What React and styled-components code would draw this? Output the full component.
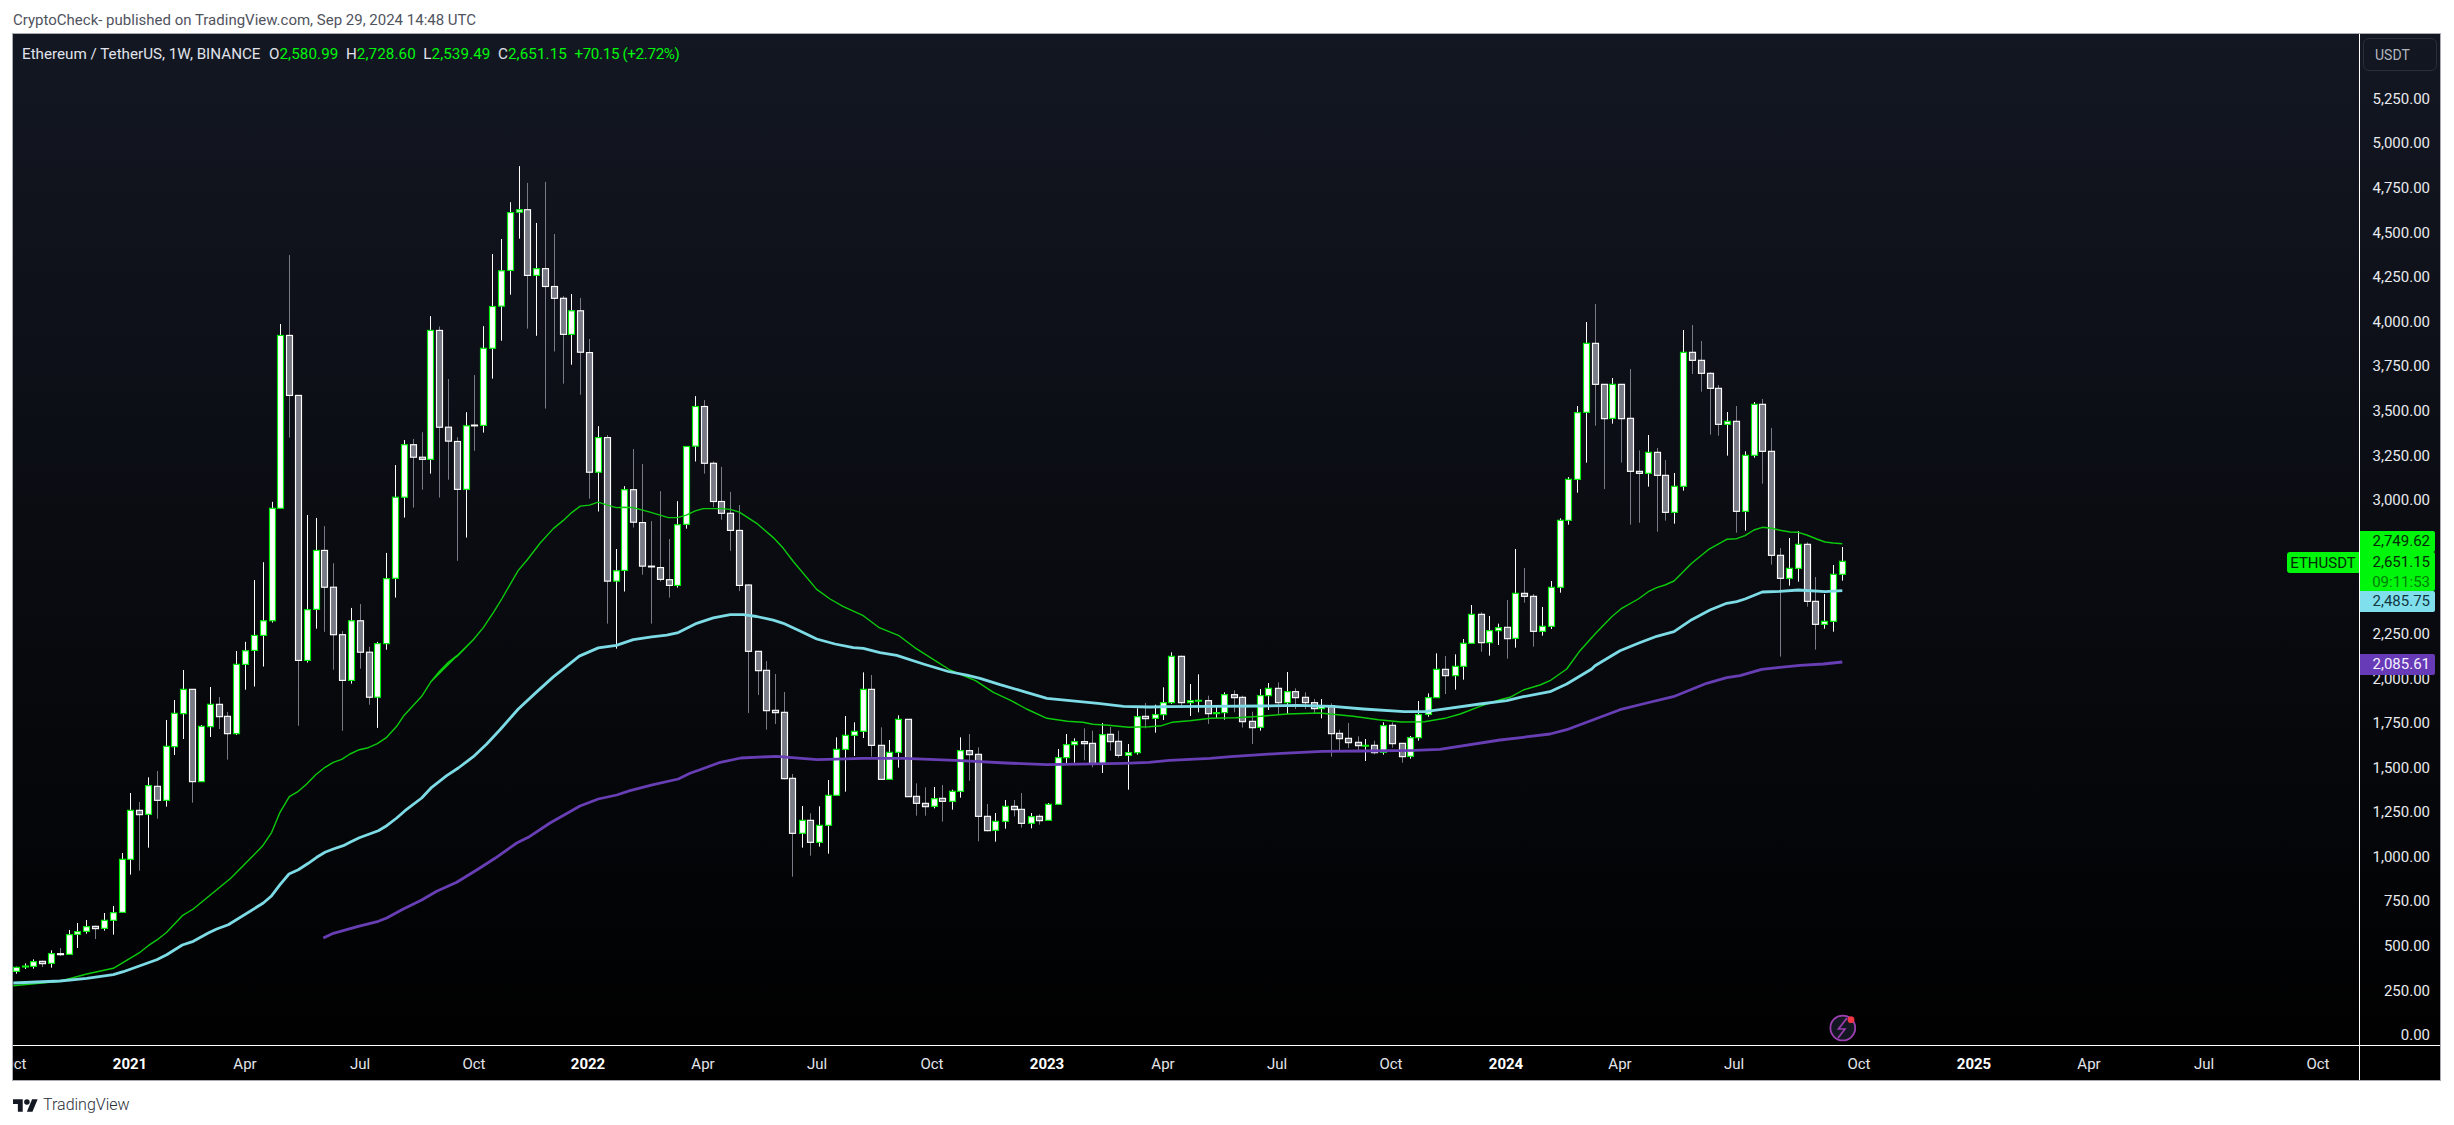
import React from "react";
import styled, { createGlobalStyle } from "styled-components";

const Global = createGlobalStyle`
  html, body { margin: 0; padding: 0; background: #fff; }
  body { font-family: Roboto, "Liberation Sans", sans-serif; }
`;

const seg = (ox, sx, oy, sy, arr) =>
  arr.map(([z, up, wt, bt, bb, wb]) => ({
    x: ox + z * sx, up,
    wt: oy + wt * sy, bt: oy + bt * sy, bb: oy + bb * sy, wb: oy + wb * sy,
  }));
const pts = (ox, sx, oy, sy, arr) => arr.map(([x, y]) => [ox + x * sx, oy + y * sy]);

const Y7 = 560 / 1568, X10 = 800 / 1568;

const candles = [
  ...seg(0, 1 / 3, 700, 1 / 3, [
    [49,1,803,805,817,824],[76,1,793,801,804,810],[100,1,781,788,802,809],[127,0,785,787,794,804],
    [154,1,754,764,793,806],[181,0,747,764,767,771],[208,1,693,707,766,766],[232,1,672,698,706,747],
    [259,1,663,683,697,704],[286,0,680,682,689,720],[313,1,642,664,688,695],[340,1,621,641,664,707],
    [367,1,462,481,640,640],[391,1,282,334,481,527],[418,0,309,334,347,515],[445,1,235,260,346,446],
    [472,0,216,262,304,359],[499,1,63,142,304,323],
  ]),
  ...seg(170, 1 / 3, 640, 1 / 3, [
    [13,1,183,223,323,348],[40,1,93,151,224,300],[67,0,151,151,428,491],[94,1,258,262,428,428],
    [121,1,144,196,263,294],[148,0,174,196,233,270],[172,0,219,232,284,362],[199,1,36,76,284,288],
  ]),
  ...seg(200, 1 / 3, 150, Y7, [
    [136,1,1380,1405,1443,1514],[163,1,1207,1362,1404,1505],[190,1,1157,1321,1362,1449],[217,1,988,1006,1321,1326],
    [241,1,490,522,1006,1006],[268,0,297,522,690,808],[295,0,690,690,1432,1615],[322,1,1025,1290,1432,1438],
    [349,1,1033,1124,1289,1343],[373,0,1056,1124,1227,1352],[400,0,1160,1227,1360,1458],[427,0,1350,1360,1488,1629],
    [454,1,1285,1321,1488,1497],[481,0,1274,1321,1409,1455],[508,0,1394,1409,1535,1556],[532,1,1380,1385,1535,1621],
    [559,1,1131,1203,1385,1402],[586,1,885,975,1202,1256],[613,1,815,828,975,1032],[640,0,812,828,863,1004],
    [667,0,793,863,869,954],[691,1,468,508,869,909],[718,0,497,508,779,976],[745,0,644,779,818,926],
    [772,0,807,819,953,1153],[799,1,737,775,953,1088],[823,0,633,773,775,845],[850,1,496,558,774,794],
    [877,1,294,441,558,643],[904,1,252,341,440,537],[931,1,149,178,340,408],[958,1,48,170,177,251],
    [982,0,95,170,354,503],[1009,1,207,335,354,523],[1036,0,92,335,385,727],[1063,0,238,385,418,567],
    [1090,0,412,418,519,657],[1114,1,406,453,519,604],[1141,0,417,453,569,688],[1168,0,532,570,905,979],
    [1195,1,776,808,905,1015],[1222,0,801,808,1210,1329],[1249,1,1120,1181,1210,1399],[1273,1,944,954,1180,1239],
    [1300,0,840,954,1045,1060],[1327,0,882,1046,1168,1192],[1354,0,1042,1168,1169,1329],[1381,0,958,1172,1205,1211],
    [1408,0,1092,1206,1222,1256],[1432,1,986,1052,1222,1228],[1459,1,833,833,1051,1063],[1486,1,692,721,832,875],
  ]),
  ...seg(500, 1 / 3, 150, Y7, [
    [613,0,703,721,880,909],[640,0,875,880,987,1003],[664,0,890,987,1020,1038],[691,0,960,1020,1068,1125],[718,0,997,1068,1222,1238],
  ]),
  ...seg(700, X10, 600, 1 / 3, [
    [95,0,-44,-42,157,342],[113,0,157,157,215,288],[130,0,186,214,335,392],[147,0,225,334,341,375],
    [164,0,279,340,539,541],[181,0,525,538,703,833],[199,1,621,664,703,746],[216,0,643,664,730,770],
    [233,1,622,679,730,743],[250,1,543,589,679,764],[267,1,415,451,589,589],[285,1,351,409,451,578],
    [302,1,370,397,409,471],[320,1,220,271,397,417],[336,0,228,271,439,473],[354,0,385,439,541,541],
    [371,1,423,460,541,542],[389,1,349,361,460,506],[407,0,361,361,593,593],[424,0,553,592,613,650],
    [441,0,565,613,623,650],[458,1,564,599,622,628],[475,0,558,598,607,668],[493,1,572,577,607,632],
    [510,1,415,455,577,596],[527,0,405,455,467,545],[544,0,445,466,652,727],[562,0,615,652,695,697],
    [579,1,642,667,694,728],[597,1,603,622,667,689],[615,0,603,622,632,652],[630,0,582,631,673,686],
    [648,1,642,653,673,688],[665,0,646,652,665,677],[683,1,612,616,664,664],[701,1,450,476,616,617],
    [718,1,405,437,476,495],[734,1,418,428,437,491],[752,0,388,428,434,484],[769,0,395,433,495,505],
    [787,1,372,407,495,522],[804,0,384,406,428,455],[820,0,395,427,469,476],[838,1,435,461,469,572],
    [856,1,328,353,461,467],[873,0,312,352,359,388],[891,1,317,347,358,401],[908,1,265,311,347,363],
    [924,1,160,172,311,315],[942,0,170,172,311,325],[960,1,255,305,311,351],[977,1,226,304,305,340],
    [995,0,290,305,344,375],[1011,1,318,341,344,357],[1028,1,280,287,341,362],[1046,0,274,287,296,340],
    [1063,0,290,295,368,386],[1081,0,338,367,386,435],[1098,1,270,290,385,395],[1114,1,252,268,290,333],
    [1132,0,250,268,311,345],[1150,1,219,278,311,345],[1167,0,268,278,296,330],[1185,0,280,295,311,330],
    [1203,0,300,311,329,345],[1218,1,300,322,329,358],[1236,0,313,320,404,473],[1253,0,392,403,419,453],
    [1271,0,372,418,431,447],[1289,0,412,430,440,460],[1304,1,420,439,441,486],[1322,0,425,439,461,466],
    [1339,1,370,380,460,467],[1357,0,370,379,434,446],[1375,0,433,433,473,491],[1392,1,411,416,472,479],
    [1408,1,306,347,416,425],[1426,1,283,296,346,353],[1443,1,163,211,296,296],[1461,0,171,211,230,285],
    [1479,1,166,202,230,272],[1496,1,120,133,202,242],[1512,1,18,46,133,133],[1530,0,40,46,131,158],
    [1547,1,51,95,131,170],[1564,1,74,86,95,138],
  ]),
  ...seg(1500, 1 / 3, 290, 1 / 3, [
    [22,0,933,1015,1049,1109],[46,1,780,913,1048,1076],[73,0,837,913,922,941],[100,0,915,922,1027,1073],
    [127,1,954,1012,1027,1040],[154,1,876,895,1012,1020],[181,1,688,694,895,911],[205,1,564,571,694,707],
    [232,1,351,371,571,611],[259,1,99,163,370,521],[286,0,45,163,286,410],[313,0,286,286,389,600],
    [337,1,267,286,388,404],[364,0,286,286,389,521],[391,0,240,388,547,707],[418,0,484,547,553,701],
    [445,1,438,490,553,593],[472,0,477,490,559,728],[496,0,513,559,670,695],[523,1,552,592,670,704],
    [550,1,123,190,592,605],[577,0,108,190,214,255],[604,0,156,214,253,308],[631,0,250,253,298,437],
    [655,0,288,298,406,440],[682,1,369,397,406,500],[709,0,351,397,667,731],[736,1,487,499,667,725],
    [763,1,339,346,499,506],[787,0,330,346,487,584],[814,0,417,487,799,827],[841,0,777,799,868,1103],
    [868,1,747,838,868,890],[895,1,726,766,838,878],[922,0,760,766,937,953],[946,0,864,937,1006,1082],
    [973,1,915,997,1006,1019],[1000,1,828,856,997,1028],[1027,1,774,817,856,875],
  ]),
];

const greenLine = [
  ...pts(0, 1 / 3, 700, 1 / 3, [[40,860],[180,847],[260,825],[340,808],[370,790],[420,760],[445,740],[472,722],[500,700],[547,650],[580,630]]),
  ...pts(170, 1 / 3, 640, 1 / 3, [[182,718],[277,622],[305,580],[330,520],[358,473],[385,457],[410,435],[437,407],[465,385],[490,370],[515,361],[540,345],[568,332],[595,326],[622,314],[650,295],[680,262],[700,232],[755,172],[783,128],[810,98],[837,70],[862,52],[912,0]]),
  ...pts(200, 1 / 3, 150, Y7, [[692,1492],[718,1463],[745,1437],[772,1418],[820,1374],[850,1340],[880,1298],[905,1260],[955,1180],[982,1150],[1020,1104],[1060,1063],[1090,1040],[1115,1018],[1141,1000],[1168,997],[1195,989],[1222,997],[1249,1004],[1273,1003],[1300,1004],[1350,1017],[1405,1032],[1432,1032],[1459,1025],[1486,1013]]),
  ...pts(500, 1 / 3, 150, Y7, [[610,1007],[664,1007],[691,1009],[718,1017],[770,1048],[820,1088],[850,1118],[880,1155],[950,1233]]),
  ...pts(700, X10, 600, 1 / 3, [[255,0],[280,22],[320,50],[350,85],[390,110],[420,145],[490,213],[540,245],[575,280],[610,305],[640,330],[680,358],[720,367],[750,370],[770,376],[800,379],[840,385],[880,383],[905,380],[925,370],[960,365],[1000,358],[1050,356],[1100,352],[1150,345],[1215,342],[1280,352],[1330,362],[1375,369],[1420,368],[1460,358],[1490,345]]),
  ...pts(1480, 1 / 3, 670, 1 / 3, [[0,112],[60,92],[90,85],[130,63],[180,48],[210,35],[260,0]]),
  ...pts(1500, 1 / 3, 290, 1 / 3, [[240,1085],[285,1035],[335,983],[365,958],[415,930],[445,908],[470,896],[495,888],[522,876],[575,823],[625,782],[680,751],[710,749],[735,740],[762,723],[787,715],[815,718],[840,724],[870,729],[895,730],[920,738],[950,750],[975,759],[1000,762],[1027,764]]),
];

const cyanLine = [
  ...pts(0, 1 / 3, 700, 1 / 3, [[40,852],[180,846],[260,838],[340,827],[370,818],[420,800],[470,782],[500,767],[547,738],[580,727],[625,702],[650,690],[685,677],[790,612],[815,590],[840,557],[867,525],[895,512],[925,493],[950,475],[975,460],[1000,450],[1030,440],[1050,430],[1078,416],[1135,395],[1160,380],[1190,357],[1215,335],[1265,297],[1295,265],[1340,230],[1375,207],[1420,173],[1460,135],[1500,92]]),
  ...pts(500, 1 / 3, 150, Y7, [[55,1568],[110,1520],[160,1478],[238,1420],[295,1397],[349,1390],[400,1374],[455,1366],[500,1361],[535,1354],[590,1328],[640,1313],[691,1304],[730,1304],[770,1309],[820,1319],[850,1328],[900,1350],[950,1372],[1005,1386],[1060,1396],[1090,1398],[1140,1410],[1190,1418],[1270,1442],[1345,1463],[1400,1473],[1440,1482]]),
  ...pts(700, X10, 600, 1 / 3, [[588,257],[640,280],[680,298],[720,304],[780,313],[830,322],[880,324],[920,323],[1000,322],[1100,321],[1170,319],[1240,322],[1300,330],[1380,338],[1420,338],[1450,332]]),
  ...pts(1480, 1 / 3, 670, 1 / 3, [[0,105],[80,95],[130,83],[210,68],[260,45],[335,0]]),
  ...pts(1500, 1 / 3, 290, 1 / 3, [[285,1130],[360,1085],[415,1063],[470,1042],[522,1028],[575,992],[630,963],[680,943],[710,938],[735,930],[787,909],[840,907],[895,903],[975,908],[1027,905]]),
];

const purpleLine = [
  ...pts(0, 1 / 3, 700, 1 / 3, [[970,717],[1000,703],[1075,682],[1135,667],[1160,657],[1210,630],[1265,603],[1310,577],[1370,550]]),
  ...pts(170, 1 / 3, 640, 1 / 3, [[925,690],[975,658],[1040,612],[1075,595],[1140,552],[1230,501],[1285,480],[1340,468],[1380,455],[1450,437],[1525,420],[1560,403]]),
  ...pts(700, X10, 600, 1 / 3, [[0,512],[40,490],[80,477],[150,472],[230,482],[320,478],[400,478],[500,484],[600,492],[680,497],[830,493],[880,490],[920,484],[1000,478],[1040,473],[1140,463],[1220,457],[1300,456],[1400,454],[1450,451]]),
  ...pts(1480, 1 / 3, 670, 1 / 3, [[60,213],[130,205],[210,195],[260,182],[340,152],[420,122],[500,102],[580,83]]),
  ...pts(1500, 1 / 3, 290, 1 / 3, [[620,1183],[680,1166],[720,1160],[785,1141],[840,1135],[900,1129],[970,1125],[1027,1119]]),
];

const toPath = (l) => l.map(([x, y]) => `${x.toFixed(1)},${y.toFixed(1)}`).join(" ");

/* the 2,750 and 2,500 ticks sit wholly under the live price tags */
const priceTicks = [
  "5,250.00","5,000.00","4,750.00","4,500.00","4,250.00","4,000.00","3,750.00","3,500.00","3,250.00","3,000.00",
  "","","2,250.00","2,000.00","1,750.00","1,500.00","1,250.00","1,000.00","750.00","500.00","250.00","0.00",
];

const timeTicks = [
  ["Oct",15],["2021",130,1],["Apr",245],["Jul",360],["Oct",474],["2022",588,1],["Apr",703],["Jul",817],["Oct",932],
  ["2023",1047,1],["Apr",1163],["Jul",1277],["Oct",1391],["2024",1506,1],["Apr",1620],["Jul",1734],["Oct",1859],
  ["2025",1974,1],["Apr",2089],["Jul",2204],["Oct",2318],
];

const Page = styled.div`
  width: 2454px;
  height: 1125px;
  background: #fff;
  overflow: hidden;
  display: flex;
  flex-direction: column;
  padding-left: 12px;
  box-sizing: border-box;
`;
const Header = styled.div`
  height: 33px;
  padding: 7px 0 0 1px;
  box-sizing: border-box;
  display: flex;
  align-items: center;
  font-size: 15px;
  color: #50535e;
  white-space: nowrap;
`;
const Frame = styled.div`
  width: 2429px;
  height: 1048px;
  box-sizing: border-box;
  border: 1px solid #a9acb5;
  background: linear-gradient(180deg, #131722 0%, #000 100%);
  display: grid;
  grid-template-columns: 2347px 80px;
  grid-template-rows: 1012px 34px;
`;
const Plot = styled.div`
  position: relative;
  border-right: 1px solid #fff;
  border-bottom: 1px solid #fff;
  width: 2346px;
  height: 1011px;
  overflow: hidden;
`;
const Legend = styled.div`
  position: absolute;
  left: 9px;
  top: 10px;
  display: flex;
  gap: 7.5px;
  font-size: 15.2px;
  line-height: 20px;
  color: #e0e3eb;
  white-space: nowrap;
`;
const Symbol = styled.span`
  margin-right: 1px;
`;
const Val = styled.span`
  color: #00f60a;
  letter-spacing: 0.1px;
`;
const Change = styled.span`
  color: #00f60a;
  letter-spacing: -0.35px;
`;
const ChartSvg = styled.svg`
  display: block;
`;
const PriceAxis = styled.div`
  position: relative;
  border-bottom: 1px solid #fff;
  overflow: hidden;
  display: flex;
  flex-direction: column;
`;
const UnitBadge = styled.div`
  margin: 4px 3px 0 3px;
  height: 33px;
  width: 74px;
  box-sizing: border-box;
  border: 1px solid #2a2e39;
  border-radius: 6px;
  padding-left: 11px;
  display: flex;
  align-items: center;
  flex-shrink: 0;
  font-size: 14px;
  color: #b2b5be;
`;
const PriceList = styled.div`
  margin-top: 5.5px;
  display: flex;
  flex-direction: column;
`;
const PriceTick = styled.div`
  height: 44.6px;
  flex-shrink: 0;
  display: flex;
  align-items: center;
  justify-content: flex-end;
  padding-right: 10px;
  font-size: 15px;
  color: #e8eaee;
`;
const PriceTag = styled.div`
  position: absolute;
  left: 0;
  width: 75px;
  top: ${(p) => p.$top}px;
  height: ${(p) => p.$h}px;
  background: ${(p) => p.$bg};
  color: ${(p) => p.$fg};
  border-radius: 0 2px 2px 0;
  display: flex;
  flex-direction: column;
  align-items: flex-end;
  justify-content: flex-start;
  padding-right: 5px;
  box-sizing: border-box;
  font-size: 15px;
  line-height: 20px;
`;
const Countdown = styled.span`
  color: #007f0a;
`;
const SymbolTag = styled.div`
  position: absolute;
  right: 0;
  top: 518px;
  width: 72px;
  height: 21px;
  background: #00f60a;
  color: #052b08;
  border-radius: 3px 0 0 3px;
  display: flex;
  align-items: center;
  justify-content: center;
  font-size: 15px;
`;
const TimeAxis = styled.div`
  overflow: hidden;
  display: flex;
  align-items: center;
  padding-top: 2px;
  background: #000;
`;
const TimeRow = styled.div`
  display: flex;
  flex-shrink: 0;
  margin-left: ${(p) => p.$off}px;
`;
const TimeTick = styled.div`
  width: ${(p) => p.$w}px;
  flex-shrink: 0;
  text-align: center;
  font-size: 15px;
  font-weight: ${(p) => (p.$bold ? 700 : 400)};
  color: ${(p) => (p.$bold ? "#fff" : "#e3e5ea")};
`;
const Corner = styled.div`
  background: #000;
  border-left: 1px solid #fff;
  margin-left: -1px;
`;
const Footer = styled.div`
  display: flex;
  align-items: center;
  gap: 5px;
  padding: 14px 0 0 1px;
  font-size: 16px;
  font-weight: 300;
  line-height: 20px;
  color: #2a2e39;
`;

const Candle = ({ c }) => {
  const x = Math.round(c.x);
  const bodyH = Math.max(c.bb - c.bt, 0.8);
  return (
    <g>
      <line x1={x + 0.5} x2={x + 0.5} y1={c.wt} y2={c.wb} stroke={c.up ? "#fff" : "#787b86"} strokeWidth="1" />
      <rect
        x={x - 2.5} y={c.bt} width="6" height={bodyH}
        fill={c.up ? "#fff" : "#787b86"}
        stroke={c.up ? "#00f00a" : "#fff"}
        strokeWidth="1.15"
      />
    </g>
  );
};

const Chart = () => (
  <ChartSvg width="2346" height="1011" viewBox="13 35 2346 1011">
    {candles.map((c, i) => <Candle key={i} c={c} />)}
    <polyline points={toPath(greenLine)} fill="none" stroke="#0ccb0c" strokeWidth="1.4" strokeLinejoin="round" />
    <polyline points={toPath(cyanLine)} fill="none" stroke="#7ddbe6" strokeWidth="2.8" strokeLinejoin="round" />
    <polyline points={toPath(purpleLine)} fill="none" stroke="#683eb4" strokeWidth="2.8" strokeLinejoin="round" />
    <g>
      <circle cx="1842.8" cy="1029" r="13" fill="#131722" />
      <circle cx="1842.8" cy="1029" r="12.4" fill="none" stroke="#9c3fb0" strokeWidth="1.8" />
      <path d="M1847 1019 L1838.5 1030 H1845 L1838 1039" fill="none" stroke="#9c3fb0" strokeWidth="1.7" strokeLinejoin="miter" />
      <circle cx="1851" cy="1020.7" r="3.4" fill="#f23645" />
    </g>
  </ChartSvg>
);

const Logo = () => (
  <svg width="25" height="13" viewBox="0 4 36 18" fill="#131722">
    <path d="M14 22H7V11H0V4h14v18z" />
    <path d="M28 22h-8l7.5-18h8L28 22z" />
    <circle cx="20" cy="8" r="4" />
  </svg>
);

/* each tick box abuts the next and is centred on the tick's x */
const timeBoxes = (() => {
  const out = [];
  let left = timeTicks[0][1] - 57;
  for (const [, c] of timeTicks) {
    const w = 2 * (c - left);
    out.push(w);
    left += w;
  }
  return out;
})();
const timeOff = timeTicks[0][1] - 57 - 13;

export default function App() {
  return (
    <Page>
      <Global />
      <Header>CryptoCheck- published on TradingView.com, Sep 29, 2024 14:48 UTC</Header>
      <Frame>
        <Plot>
          <Chart />
          <Legend>
            <Symbol>Ethereum / TetherUS, 1W, BINANCE</Symbol>
            <span>O<Val>2,580.99</Val></span>
            <span>H<Val>2,728.60</Val></span>
            <span>L<Val>2,539.49</Val></span>
            <span>C<Val>2,651.15</Val></span>
            <Change>+70.15 (+2.72%)</Change>
          </Legend>
          <SymbolTag>ETHUSDT</SymbolTag>
        </Plot>
        <PriceAxis>
          <UnitBadge>USDT</UnitBadge>
          <PriceList>
            {priceTicks.map((t, i) => <PriceTick key={i}>{t}</PriceTick>)}
          </PriceList>
          <PriceTag $top={497} $h={21} $bg="#00f60a" $fg="#052b08">2,749.62</PriceTag>
          <PriceTag $top={518} $h={39} $bg="#00f60a" $fg="#052b08">
            <span>2,651.15</span>
            <Countdown>09:11:53</Countdown>
          </PriceTag>
          <PriceTag $top={557} $h={21} $bg="#7fdfec" $fg="#10383f">2,485.75</PriceTag>
          <PriceTag $top={620} $h={21} $bg="#673ab7" $fg="#f5f0ff">2,085.61</PriceTag>
        </PriceAxis>
        <TimeAxis>
          <TimeRow $off={timeOff}>
            {timeTicks.map(([t, , b], i) => (
              <TimeTick key={i} $bold={b} $w={timeBoxes[i]}>{t}</TimeTick>
            ))}
          </TimeRow>
        </TimeAxis>
        <Corner />
      </Frame>
      <Footer>
        <Logo />
        <span>TradingView</span>
      </Footer>
    </Page>
  );
}
